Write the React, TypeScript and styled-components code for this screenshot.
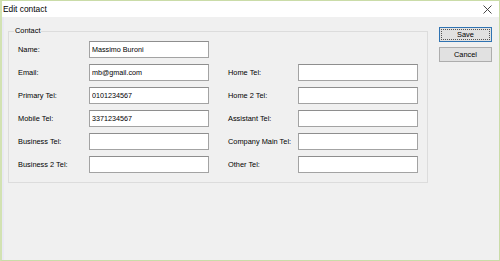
import React from "react";
import styled, { createGlobalStyle } from "styled-components";

const Global = createGlobalStyle`
  html, body { margin: 0; padding: 0; background: #f0f0f0; }
  body { width: 500px; height: 261px; overflow: hidden; }
  * { box-sizing: border-box; }
`;

const Window = styled.div`
  width: 500px;
  height: 261px;
  display: flex;
  flex-direction: column;
  border: 1px solid #cadca8;
  border-left: 2px solid #d2e2b2;
  background: #f0f0f0;
  font-family: "Liberation Sans", Arial, sans-serif;
  color: #000;
`;

const TitleBar = styled.div`
  height: 16px;
  flex: none;
  display: flex;
  align-items: center;
  justify-content: space-between;
  background: #ffffff;
  padding: 0 7px 0 1px;
  font-size: 8.4px;
`;

const CloseButton = styled.button`
  border: 0;
  background: transparent;
  padding: 0;
  width: 9px;
  height: 9px;
  display: flex;
  align-items: center;
  justify-content: center;
  margin-top: 1px;
`;

const Body = styled.div`
  flex: 1;
  display: flex;
  align-items: flex-start;
  gap: 11px;
  padding: 9px 0 0 4px;
  border-left: 2px solid #e9e9f3;
`;

const GroupBox = styled.fieldset`
  margin: 0;
  width: 420px;
  border: 1px solid #dcdcdc;
  padding: 5px 9px 9px 9px;
  display: flex;
  flex-direction: column;
  gap: 6px;
`;

const Legend = styled.legend`
  font-size: 7.4px;
  line-height: 10px;
  padding: 0 1px;
  margin-left: -4px;
`;

const Row = styled.div`
  display: flex;
  gap: 19px;
`;

const Field = styled.div`
  display: flex;
  align-items: center;
`;

const Label = styled.label<{ $w: number }>`
  width: ${(p) => p.$w}px;
  flex: none;
  font-size: 7.4px;
  white-space: nowrap;
`;

const TextBox = styled.input`
  width: 120px;
  height: 17px;
  border: 1px solid #a3a3a3;
  border-top-color: #8e8e8e;
  background: #fff;
  padding: 0 2px;
  margin: 0;
  font-family: "Liberation Sans", Arial, sans-serif;
  font-size: 7.2px;
  color: #000;
  outline: none;
`;

const Buttons = styled.div`
  display: flex;
  flex-direction: column;
  gap: 5px;
  margin-top: 1px;
`;

const Button = styled.button<{ $default?: boolean }>`
  width: 53px;
  height: 15px;
  margin: 0;
  padding: 0;
  background: #e1e1e1;
  border: 1px solid ${(p) => (p.$default ? "#2f73b2" : "#adadad")};
  font-family: "Liberation Sans", Arial, sans-serif;
  font-size: 7.4px;
  color: #000;
  position: relative;
  ${(p) =>
    p.$default
      ? `&::after { content: ""; position: absolute; inset: 1px; border: 1px dotted #555; }`
      : ""}
`;

type F = { label: string; value?: string };

const left: F[] = [
  { label: "Name:", value: "Massimo Buroni" },
  { label: "Email:", value: "mb@gmail.com" },
  { label: "Primary Tel:", value: "0101234567" },
  { label: "Mobile Tel:", value: "3371234567" },
  { label: "Business Tel:" },
  { label: "Business 2 Tel:" },
];

const right: (F | null)[] = [
  null,
  { label: "Home Tel:" },
  { label: "Home 2 Tel:" },
  { label: "Assistant Tel:" },
  { label: "Company Main Tel:" },
  { label: "Other Tel:" },
];

export default function App() {
  return (
    <>
      <Global />
      <Window>
        <TitleBar>
          <span>Edit contact</span>
          <CloseButton aria-label="Close">
            <svg width="9" height="9" viewBox="0 0 9 9">
              <path d="M0.5 0.5 L8.5 8.5 M8.5 0.5 L0.5 8.5" stroke="#333" strokeWidth="0.9" />
            </svg>
          </CloseButton>
        </TitleBar>
        <Body>
          <GroupBox>
            <Legend>Contact</Legend>
            {left.map((l, i) => {
              const r = right[i];
              return (
                <Row key={l.label}>
                  <Field>
                    <Label $w={71}>{l.label}</Label>
                    <TextBox defaultValue={l.value ?? ""} />
                  </Field>
                  {r && (
                    <Field>
                      <Label $w={70}>{r.label}</Label>
                      <TextBox defaultValue={r.value ?? ""} />
                    </Field>
                  )}
                </Row>
              );
            })}
          </GroupBox>
          <Buttons>
            <Button $default>Save</Button>
            <Button>Cancel</Button>
          </Buttons>
        </Body>
      </Window>
    </>
  );
}
